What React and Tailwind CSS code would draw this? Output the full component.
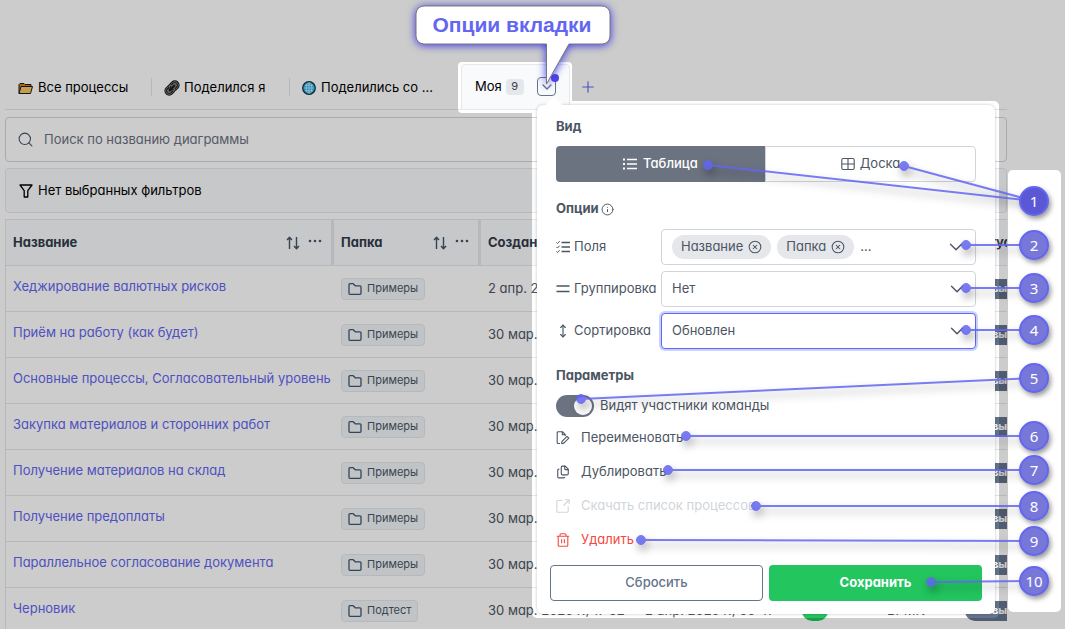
import React from 'react';
import { Search, ChevronDown, Plus, Info, MoveVertical, CircleX, Files } from 'lucide-react';

const rows = [
  ['Хеджирование валютных рисков', 'Примеры', '2 апр. 2025 г., 00:47'],
  ['Приём на работу (как будет)', 'Примеры', '30 мар. 2025 г., 17:32'],
  ['Основные процессы, Согласовательный уровень', 'Примеры', '30 мар. 2025 г., 17:32'],
  ['Закупка материалов и сторонних работ', 'Примеры', '30 мар. 2025 г., 17:32'],
  ['Получение материалов на склад', 'Примеры', '30 мар. 2025 г., 17:32'],
  ['Получение предоплаты', 'Примеры', '30 мар. 2025 г., 17:32'],
  ['Параллельное согласование документа', 'Примеры', '30 мар. 2025 г., 17:32'],
  ['Черновик', 'Подтест', '30 мар. 2025 г., 17:32'],
];

// Dot position and badge height for every numbered note
const notes = [
  { n: 1, y: 201, dots: [[708, 165], [904, 166]] },
  { n: 2, y: 245, dots: [[966, 245]] },
  { n: 3, y: 288, dots: [[966, 288]] },
  { n: 4, y: 330, dots: [[966, 330]] },
  { n: 5, y: 378, dots: [[581, 399]] },
  { n: 6, y: 436, dots: [[686, 436]] },
  { n: 7, y: 470, dots: [[668, 470]] },
  { n: 8, y: 506, dots: [[756, 506]] },
  { n: 9, y: 541, dots: [[641, 540]] },
  { n: 10, y: 581, dots: [[931, 582]] },
];

function FolderEmoji() {
  return (
    <svg width="15" height="14" viewBox="0 0 15 14" aria-hidden="true">
      <path d="M1 12.5V3.500L2 2.500h4l1 1h6V6" fill="#e07a1c" stroke="#1b1b1b" strokeLinejoin="round" />
      <path d="M1 12.5 3 5.500h11.500l-2 7z" fill="#f7c566" stroke="#1b1b1b" strokeLinejoin="round" />
    </svg>
  );
}

function ChainEmoji() {
  return (
    <svg width="16" height="16" viewBox="0 0 16 16" aria-hidden="true">
      <g fill="none" transform="rotate(-45 8 8)">
        <rect x="0.5" y="4.5" width="9.5" height="7" rx="3.5" fill="#777" stroke="#1b1b1b" strokeWidth="2.6" />
        <rect x="6" y="4.5" width="9.5" height="7" rx="3.5" fill="#777" stroke="#1b1b1b" strokeWidth="2.6" />
        <rect x="0.5" y="4.5" width="9.5" height="7" rx="3.5" stroke="#8a8a8a" strokeWidth="0.8" />
        <rect x="6" y="4.5" width="9.5" height="7" rx="3.5" stroke="#8a8a8a" strokeWidth="0.8" />
        <path d="M4 8h8" stroke="#1b1b1b" strokeWidth="2" />
      </g>
    </svg>
  );
}

function GlobeEmoji() {
  return (
    <svg width="14" height="14" viewBox="0 0 14 14" aria-hidden="true">
      <circle cx="7" cy="7" r="6.3" fill="#1fb0ea" stroke="#16303d" strokeWidth="1.2" />
      <g fill="none" stroke="#d8f3ff" strokeWidth="0.8">
        <path d="M7 2v10M2 7h10M3 4.300h8M3 9.700h8" />
        <ellipse cx="7" cy="7" rx="2.8" ry="5" />
      </g>
    </svg>
  );
}

function Icon({ children, className = '' }) {
  return (
    <svg
      width="14"
      height="14"
      viewBox="0 0 14 14"
      fill="none"
      stroke="currentColor"
      strokeWidth="1.1"
      strokeLinejoin="round"
      className={`shrink-0 ${className}`}
      aria-hidden="true"
    >
      {children}
    </svg>
  );
}

function FunnelIcon() {
  return (
    <Icon>
      <path d="M1 1h12L8.8 6.6V13H5.2V6.6z" strokeWidth="1.3" />
    </Icon>
  );
}

function FolderIcon() {
  return (
    <Icon className="text-slate-600">
      <path d="M1 11.300V2.700a1 1 0 0 1 1-1h3.200l2 2.100H12a1 1 0 0 1 1 1v6.500a1 1 0 0 1-1 1H2a1 1 0 0 1-1-1z" strokeWidth="1.3" />
    </Icon>
  );
}

function SortIcon() {
  return (
    <Icon>
      <path d="M3.5 13V1.5M1 4l2.5-2.7L6 4M10.5 1v11.5M8 10l2.5 2.7L13 10" strokeWidth="1.4" />
    </Icon>
  );
}

function DotsIcon() {
  return (
    <svg width="14" height="4" viewBox="0 0 14 4" fill="currentColor" aria-hidden="true">
      <circle cx="2" cy="2" r="1.3" />
      <circle cx="7" cy="2" r="1.3" />
      <circle cx="12" cy="2" r="1.3" />
    </svg>
  );
}

function ListIcon() {
  return (
    <Icon>
      <path d="M4 2.500h10M4 7h10M4 11.500h10" strokeWidth="1.3" />
      <path d="M0 2.500h2M0 7h2M0 11.500h2" strokeWidth="1.8" />
    </Icon>
  );
}

function CheckListIcon() {
  return (
    <Icon>
      <path d="M5.500 2.500H14M5.500 7H14M5.500 11.500H14" strokeWidth="1.3" />
      <path d="m.4 2.400 1.100 1.100L3.700 1.200M.4 6.900 1.500 8l2.200-2.300M.4 11.400l1.100 1.100 2.200-2.300" strokeWidth="1" />
    </Icon>
  );
}

function BoardIcon() {
  return (
    <Icon>
      <rect x="0.8" y="1.5" width="12.4" height="11" rx="1.5" />
      <path d="M7 1.5v11M0.8 7h12.4" />
    </Icon>
  );
}

function TwoLinesIcon() {
  return (
    <Icon>
      <path d="M0.5 4h13M0.5 9.500h13" strokeWidth="1.3" />
    </Icon>
  );
}

function RenameIcon() {
  return (
    <Icon>
      <path d="M4 12.5H2.2a1 1 0 0 1-1-1v-9.8a1 1 0 0 1 1-1h4.3L9.3 3.6V5M6.3.9v2.8h2.9" />
      <path d="m6 10.3 5-5 1.8 1.8-5 5L5.7 12.7z" />
    </Icon>
  );
}

function OpenIcon() {
  return (
    <Icon>
      <path d="M6.5 1.5H1.8a1 1 0 0 0-1 1v9.7a1 1 0 0 0 1 1h9.4a1 1 0 0 0 1-1V7.5M9 .8h4.2V5M13 1 7.5 6.5" />
    </Icon>
  );
}

function TrashIcon() {
  return (
    <Icon>
      <path d="M.8 3.3h12.4M2.2 3.3v8.9a1 1 0 0 0 1 1h7.6a1 1 0 0 0 1-1V3.3M4 3.3V1.7a1 1 0 0 1 1-1h4a1 1 0 0 1 1 1v1.6M5.6 6.2v4M8.4 6.2v4" />
    </Icon>
  );
}

function HeadCell({ children, tools, last }) {
  return (
    <th
      scope="col"
      className={`h-[46px] border-b border-[#e5e7eb] bg-[#f8fafc] px-[7px] text-left font-bold text-[#333b4a] ${
        last ? '' : 'border-r-[3px]'
      }`}
    >
      <div className="flex items-center justify-between">
        <span>{children}</span>
        {tools && (
          <span className="flex items-center gap-2 pr-0.5 text-[#475569]">
            <button type="button" aria-label="Сортировать">
              <SortIcon />
            </button>
            <button type="button" aria-label="Меню столбца" className="pb-1">
              <DotsIcon />
            </button>
          </span>
        )}
      </div>
    </th>
  );
}

function ProcessTable() {
  return (
    <div className="mt-1.5 overflow-hidden border-l border-t border-[#e5e7eb]">
      <table className="w-[1075px] table-fixed border-separate border-spacing-0">
        <colgroup>
          <col className="w-[328px]" />
          <col className="w-[147px]" />
          <col className="w-[157px]" />
          <col className="w-[157px]" />
          <col className="w-[85px]" />
          <col className="w-[78px]" />
          <col className="w-[123px]" />
        </colgroup>
        <thead>
          <tr>
            <HeadCell tools>Название</HeadCell>
            <HeadCell tools>Папка</HeadCell>
            <HeadCell>Создан</HeadCell>
            <HeadCell>Обновлен</HeadCell>
            <HeadCell>Доступ</HeadCell>
            <HeadCell>Тип</HeadCell>
            <HeadCell last>Статус</HeadCell>
          </tr>
        </thead>
        <tbody>
          {rows.map(([name, folder, created]) => (
            <tr key={name} className="*:h-[46px] *:border-b *:border-[#e5e7eb] *:px-[7px] *:whitespace-nowrap">
              <td className="pb-1">
                <a href="#process" className="text-[#6366f1]">
                  {name}
                </a>
              </td>
              <td>
                <span className="inline-flex h-[22px] items-center gap-[5px] rounded border border-[#e5e7eb] bg-[#f1f5f9] px-1.5 align-middle text-[11px] text-[#4b5563]">
                  <FolderIcon />
                  {folder}
                </span>
              </td>
              <td className="text-[#4b5563]">{created}</td>
              <td className="text-[#4b5563]">2 апр. 2025 г., 00:47</td>
              <td>
                <span className="block h-5 w-[26px] rounded-full bg-[#22c55e]" />
              </td>
              <td className="text-[#4b5563]">BPMN</td>
              <td>
                <span className="inline-flex h-5 items-center rounded-full bg-[#64748b] px-3 align-middle text-[11px] font-bold text-white">
                  Новый
                </span>
              </td>
            </tr>
          ))}
        </tbody>
      </table>
    </div>
  );
}

function TabBar() {
  return (
    <nav className="flex h-[46px] items-center border-b border-[#e5e7eb] pl-[13px] text-[13px] text-black">
      <button type="button" className="flex w-[133px] items-center gap-[5px] pt-0.5">
        <FolderEmoji />
        Все процессы
      </button>
      <span className="h-[18px] w-px bg-[#e5e7eb]" />
      <button type="button" className="flex w-[137px] items-center gap-1 pl-3 pt-0.5">
        <ChainEmoji />
        Поделился я
      </button>
      <span className="h-[18px] w-px bg-[#e5e7eb]" />
      <button type="button" className="flex w-[171px] items-center gap-[5px] whitespace-nowrap pl-3 pt-0.5">
        <GlobeEmoji />
        Поделились со ...
      </button>
      <div className="flex h-[46px] w-[109px] items-center rounded-t border border-[#e5e7eb] bg-[#f8fafc] pl-[13px]">
        <button type="button" className="flex items-center gap-1">
          Моя
          <span className="flex h-4 w-[18px] items-center justify-center rounded bg-[#e5e7eb] text-[11px] text-[#374151]">
            9
          </span>
        </button>
        <button
          type="button"
          aria-label="Опции вкладки"
          className="relative ml-auto mr-[13px] flex size-[19px] items-center justify-center rounded border border-[#64748b] text-[#64748b]"
        >
          <ChevronDown size={16} className="shrink-0" />
          <span className="absolute -right-1 -top-1 size-2 rounded-full bg-[#4f46e5]" />
        </button>
      </div>
      <button type="button" aria-label="Добавить вкладку" className="ml-[9px] text-[#6366f1]">
        <Plus size={18} strokeWidth={1.5} />
      </button>
    </nav>
  );
}

// Darkens the page outside of the highlighted areas
function Spotlight() {
  return (
    <svg className="pointer-events-none absolute inset-0 size-full" aria-hidden="true">
      <defs>
        <mask id="spotlight">
          <rect width="100%" height="100%" fill="white" />
          <rect x="458" y="62" width="114" height="51" rx="4" fill="black" />
          <rect x="532" y="101" width="467" height="517" rx="5" fill="black" />
          <rect x="1008" y="170" width="53" height="442" rx="5" fill="black" />
        </mask>
      </defs>
      <rect width="100%" height="100%" fill="black" fillOpacity="0.2" mask="url(#spotlight)" />
    </svg>
  );
}

function Chip({ children }) {
  return (
    <span className="flex h-6 items-center gap-[5px] rounded-full bg-[#e5e7eb] px-[9px]">
      {children}
      <button type="button" aria-label={`Убрать ${children}`}>
        <CircleX size={14} strokeWidth={1.8} />
      </button>
    </span>
  );
}

function Field({ icon, label, id, children }) {
  return (
    <div className="flex h-9 items-center">
      <label htmlFor={id} className="flex w-[105px] shrink-0 items-center gap-1">
        {icon}
        {label}
      </label>
      {children}
    </div>
  );
}

function SelectBox({ id, value, options, className }) {
  return (
    <div className="relative flex-1">
      <select id={id} defaultValue={value} className={`h-9 w-full appearance-none rounded border bg-white px-2.5 outline-none ${className}`}>
        {options.map((o) => (
          <option key={o}>{o}</option>
        ))}
      </select>
      <ChevronDown size={22} strokeWidth={1.5} className="pointer-events-none absolute right-2 top-[7px]" />
    </div>
  );
}

function OptionsPopover() {
  return (
    <section className="absolute left-[537px] top-[105px] w-[458px] rounded-md bg-white px-[13px] pb-[13px] pt-[11px] text-[13px] text-[#4b5563] shadow-[0_0_3px_rgba(0,0,0,0.25)]">
      <span className="absolute -top-1.5 left-[11px] size-3 rotate-45 bg-white" />
      <div className="px-1.5">
        <h2 className="h-5 font-bold leading-5">Вид</h2>
        <div className="mt-2.5 flex h-9">
          <button type="button" className="flex flex-1 items-center justify-center gap-1.5 rounded-l bg-[#6b7280] font-medium text-white">
            <ListIcon />
            Таблица
          </button>
          <button type="button" className="flex flex-1 items-center justify-center gap-[5px] rounded-r border border-[#d1d5db]">
            <BoardIcon />
            Доска
          </button>
        </div>

        <h2 className="mt-[17px] flex h-5 items-center gap-0.5 font-bold">
          Опции
          <Info size={13} strokeWidth={1.8} />
        </h2>
        <div className="mt-2.5 flex flex-col gap-1.5">
          <Field id="fields" label="Поля" icon={<CheckListIcon />}>
            <div id="fields" className="flex h-9 flex-1 items-center gap-1.5 rounded border border-[#d1d5db] px-2.5">
              <Chip>Название</Chip>
              <Chip>Папка</Chip>
              <span>...</span>
              <ChevronDown size={22} strokeWidth={1.5} className="-mr-0.5 ml-auto" />
            </div>
          </Field>
          <Field id="group" label="Группировка" icon={<TwoLinesIcon />}>
            <SelectBox id="group" value="Нет" options={['Нет', 'Папка', 'Статус']} className="border-[#d1d5db]" />
          </Field>
          <Field id="sort" label="Сортировка" icon={<MoveVertical size={14} />}>
            <SelectBox
              id="sort"
              value="Обновлен"
              options={['Обновлен', 'Создан', 'Название']}
              className="border-[#6366f1] ring-2 ring-[#c7d2fe]"
            />
          </Field>
        </div>

        <h2 className="mt-4 h-5 font-bold leading-5">Параметры</h2>
        <label className="mt-2.5 flex h-[22px] items-center gap-1.5">
          <input type="checkbox" defaultChecked className="peer sr-only" />
          <span className="flex h-[22px] w-[38px] items-center justify-end rounded-full bg-[#6b7280] p-0.5">
            <span className="size-[18px] rounded-full bg-white" />
          </span>
          Видят участники команды
        </label>
        <div className="mt-1 flex flex-col items-start *:flex *:h-[34px] *:items-center *:gap-[11px]">
          <button type="button">
            <RenameIcon />
            Переименовать
          </button>
          <button type="button">
            <Files size={14} strokeWidth={1.9} />
            Дублировать
          </button>
          <button type="button" disabled className="text-[#d1d5db]">
            <OpenIcon />
            Скачать список процессов
          </button>
          <button type="button" className="text-[#f5483f]">
            <TrashIcon />
            Удалить
          </button>
        </div>
      </div>
      <div className="mt-2 grid h-9 grid-cols-2 gap-1.5">
        <button type="button" className="rounded border border-[#64748b] font-medium text-[#64748b]">
          Сбросить
        </button>
        <button type="button" className="rounded bg-[#22c55e] font-bold text-white">
          Сохранить
        </button>
      </div>
    </section>
  );
}

function Callout() {
  return (
    <div className="absolute left-[404px] top-0">
      <svg width="220" height="100" viewBox="404 0 220 100" aria-hidden="true">
        <path
          d="M424 6h178a8 8 0 0 1 8 8v22a8 8 0 0 1-8 8h-33L546.500 84V44H424a8 8 0 0 1-8-8V14a8 8 0 0 1 8-8z"
          fill="white"
          stroke="#77777f"
          className="drop-shadow-[0_1px_4px_#3a35e0]"
        />
      </svg>
      <p className="absolute left-3 top-1.5 flex h-[38px] w-[192px] items-center justify-center whitespace-nowrap font-['Liberation_Sans',sans-serif] text-[21px] font-bold text-[#6366f1]">
        Опции вкладки
      </p>
    </div>
  );
}

function Notes() {
  return (
    <>
      <svg className="pointer-events-none absolute inset-0 size-full drop-shadow-[2px_5px_4px_rgba(0,0,0,0.4)]" aria-hidden="true">
        {notes.map(({ n, y, dots }) =>
          dots.map(([dx, dy]) => (
            <g key={`${n}-${dx}`} stroke="#6366f1" fill="#6366f1" opacity="0.85">
              <path d={`M${dx} ${dy}L1034 ${y}`} strokeWidth="2" />
              <circle cx={dx} cy={dy} r="4.500" />
            </g>
          ))
        )}
      </svg>
      {notes.map(({ n, y }) => (
        <span
          key={n}
          style={{ top: y - 15 }}
          className={`absolute left-[1019px] flex size-[30px] items-center justify-center rounded-full border-2 border-[#6366f1] font-['Noto_Sans',sans-serif] text-[15px] text-white shadow-[2px_3px_5px_rgba(0,0,0,0.4)] ${
            n === 1 ? 'bg-[#5b58d6]' : 'bg-[#7777da]'
          }`}
        >
          {n}
        </span>
      ))}
    </>
  );
}

export default function App() {
  return (
    <div className="relative h-screen overflow-hidden bg-white font-[Inter,'Noto_Sans',sans-serif] text-[13px] [font-feature-settings:'cv11']">
      <main className="ml-[5px] mr-[58px] pt-16">
        <TabBar />
        <label className="mt-[7px] flex h-[45px] items-center gap-2.5 rounded border border-[#d1d5db] px-[11px]">
          <Search size={17} strokeWidth={1.5} className="shrink-0 text-[#475569]" />
          <input
            type="search"
            aria-label="Поиск"
            placeholder="Поиск по названию диаграммы"
            className="w-full bg-transparent outline-none placeholder:text-[#6b7280]"
          />
        </label>
        <button type="button" className="mt-1.5 flex h-[45px] w-full items-center gap-[5px] rounded border border-[#e5e7eb] bg-[#f8fafc] px-[13px] text-black">
          <FunnelIcon />
          Нет выбранных фильтров
        </button>
        <ProcessTable />
      </main>
      <Spotlight />
      <OptionsPopover />
      <Callout />
      <Notes />
    </div>
  );
}
